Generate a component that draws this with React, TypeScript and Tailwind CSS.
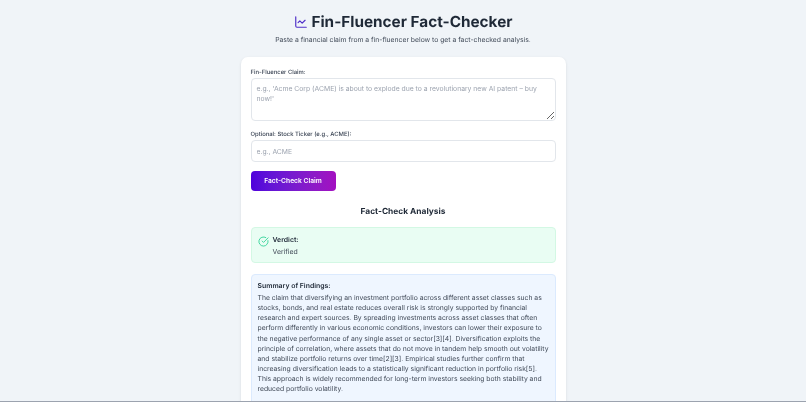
import { LineChart, CircleCheckBig } from "lucide-react";

export default function App() {
  return (
    <div className="h-[402px] overflow-hidden bg-[#f0f4f8] font-['Inter',sans-serif] [text-rendering:geometricPrecision] flex flex-col">
      <div className="flex-1 min-h-0 overflow-hidden flex flex-col items-center pt-[12px] will-change-transform">
        <div className="flex items-center gap-[4px] h-[20px]">
          <LineChart className="w-[14px] h-[14px] text-[#4f2fc9]" strokeWidth={2} />
          <h1 className="text-[15.3px] leading-[20px] font-bold text-[#1f2937]">Fin-Fluencer Fact-Checker</h1>
        </div>
        <p className="mt-[1px] text-[6.8px] leading-[13px] text-[#414a58]">
          Paste a financial claim from a fin-fluencer below to get a fact-checked analysis.
        </p>
        <div className="mt-[11px] w-[325px] flex-none bg-white rounded-[7px] shadow-sm px-[10px] pt-[11px] pb-[10px]">
          <label className="block text-[5.9px] leading-[9px] font-medium text-[#374151]">Fin-Fluencer Claim:</label>
          <textarea
            readOnly
            className="mt-[1px] block w-full h-[43px] border border-[#e2e6eb] rounded-[4px] px-[5px] py-[5px] text-[6.8px] leading-[10.2px] placeholder:text-[#9ca3af] outline-none"
            placeholder="e.g., 'Acme Corp (ACME) is about to explode due to a revolutionary new AI patent – buy now!'"
          />
          <label className="block mt-[9px] text-[5.9px] leading-[9px] font-medium text-[#374151]">Optional: Stock Ticker (e.g., ACME):</label>
          <input
            readOnly
            className="mt-[1px] block w-full h-[22px] border border-[#e2e6eb] rounded-[4px] px-[5px] text-[6.8px] placeholder:text-[#9ca3af] outline-none"
            placeholder="e.g., ACME"
          />
          <button className="mt-[9px] block w-[85px] h-[20px] rounded-[4px] bg-gradient-to-r from-[#4f00dc] to-[#a30fc0] text-white text-[6.7px] font-semibold">
            Fact-Check Claim
          </button>
          <h2 className="mt-[15px] text-center text-[8.4px] leading-[13px] font-bold text-[#1f2937]">Fact-Check Analysis</h2>
          <div className="mt-[8px] h-[36px] bg-[#e9fdf3] border border-[#d3f8e4] rounded-[4px] flex pl-[6px] pt-[6px] gap-[4px]">
            <CircleCheckBig className="w-[11px] h-[11px] mt-[2px] text-[#34d399]" strokeWidth={2} />
            <div className="text-[6.9px] leading-[12px]">
              <div className="font-semibold text-[#1f2937]">Verdict:</div>
              <div className="text-[#414a58]">Verified</div>
            </div>
          </div>
          <div className="mt-[11px] bg-[#eff6ff] border border-[#dbeafe] rounded-[4px] pl-[6px] pr-[5.5px] pt-[5px] pb-[10px]">
            <div className="text-[6.9px] leading-[12px] font-semibold text-[#1f2937]">Summary of Findings:</div>
            <p className="mt-[1px] text-[6.8px] leading-[10.15px] text-[#414a58]">
              The claim that diversifying an investment portfolio across different asset classes such as stocks, bonds, and real estate reduces overall risk is strongly supported by financial research and expert sources. By spreading investments across asset classes that often perform differently in various economic conditions, investors can lower their exposure to the negative performance of any single asset or sector[3][4]. Diversification exploits the principle of correlation, where assets that do not move in tandem help smooth out volatility and stabilize portfolio returns over time[2][3]. Empirical studies further confirm that increasing diversification leads to a statistically significant reduction in portfolio risk[5]. This approach is widely recommended for long-term investors seeking both stability and reduced portfolio volatility.
            </p>
          </div>
        </div>
      </div>
      <div className="h-[1px] flex-none bg-[#9ca3af]" />
    </div>
  );
}
